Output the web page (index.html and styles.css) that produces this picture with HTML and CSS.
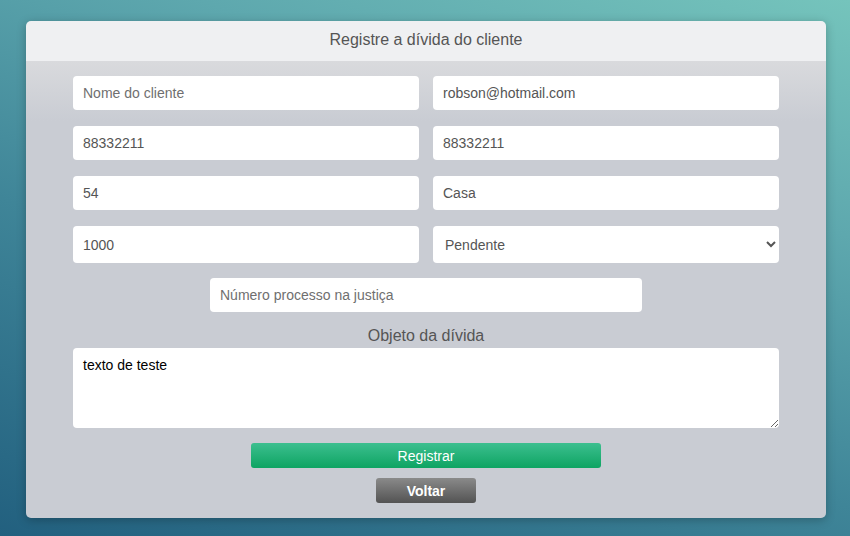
FILE: index.html
```html
<!DOCTYPE html>
<html lang="pt-BR">
<head>
<meta charset="utf-8">
<title>Registre a dívida do cliente</title>
<link rel="stylesheet" href="styles.css">
</head>
<body>
<div class="card">
  <div class="card-header">Registre a dívida do cliente</div>
  <form class="card-body">
    <div class="grid">
      <input class="field" type="text" placeholder="Nome do cliente">
      <input class="field" type="text" value="robson@hotmail.com">
      <input class="field" type="text" value="88332211">
      <input class="field" type="text" value="88332211">
      <input class="field" type="text" value="54">
      <input class="field" type="text" value="Casa">
      <input class="field tall" type="text" value="1000">
      <select class="field tall select">
        <option>Pendente</option>
        <option>Pago</option>
      </select>
    </div>
    <input class="field process" type="text" placeholder="Número processo na justiça">
    <label class="label">Objeto da dívida</label>
    <textarea class="textarea">texto de teste</textarea>
    <button type="button" class="btn btn-green">Registrar</button>
    <button type="button" class="btn btn-gray">Voltar</button>
  </form>
</div>
</body>
</html>
```
FILE: styles.css
```css
html, body {
  margin: 0;
  padding: 0;
  height: 100%;
}
body {
  background: linear-gradient(200deg, #75c4bc 0%, #5ea8ae 28%, #3f8598 60%, #22607f 100%);
  font-family: "Liberation Sans", Arial, sans-serif;
  overflow: hidden;
}
.card {
  width: 800px;
  margin: 21px 0 0 26px;
  border-radius: 5px;
  overflow: hidden;
  box-shadow: 0 2px 10px rgba(0, 0, 0, 0.25);
}
.card-header {
  height: 40px;
  line-height: 38px;
  background: #eff0f2;
  color: #555;
  font-size: 16px;
  text-align: center;
}
.card-body {
  background: linear-gradient(to bottom, #d9dadd 0%, #c9ccd3 60px, #c9ccd3 100%);
  padding: 15px 47px 15px 47px;
  display: flex;
  flex-direction: column;
  align-items: center;
}
.grid {
  width: 706px;
  display: grid;
  grid-template-columns: 346px 346px;
  column-gap: 14px;
  row-gap: 16px;
}
.field {
  box-sizing: border-box;
  height: 34px;
  border: none;
  border-radius: 4px;
  background: #fff;
  padding: 0 10px;
  font-family: "Liberation Sans", Arial, sans-serif;
  font-size: 14px;
  color: #555;
  outline: none;
  margin: 0;
}
.field::placeholder {
  color: #6f6f6f;
}
.tall {
  height: 37px;
}
.select {
  padding-left: 8px;
}
.process {
  width: 432px;
  margin-top: 15px;
}
.label {
  display: block;
  margin-top: 13px;
  height: 22px;
  line-height: 22px;
  font-size: 16px;
  color: #555;
}
.textarea {
  box-sizing: border-box;
  width: 706px;
  height: 80px;
  margin-top: 1px;
  border: none;
  border-radius: 4px;
  background: #fff;
  padding: 9px 10px;
  font-family: "Liberation Sans", Arial, sans-serif;
  font-size: 14px;
  color: #000;
  outline: none;
  resize: vertical;
}
.btn {
  box-sizing: border-box;
  height: 25px;
  border: none;
  border-radius: 3px;
  color: #fff;
  font-family: "Liberation Sans", Arial, sans-serif;
  font-size: 14px;
  padding: 0;
  cursor: pointer;
}
.btn-green {
  width: 350px;
  margin-top: 15px;
  font-weight: normal;
  background: linear-gradient(to bottom, #3cbf8f, #0ea462);
}
.btn-gray {
  width: 100px;
  margin-top: 10px;
  font-weight: bold;
  background: linear-gradient(to bottom, #8a8a8a, #535353);
}
```
